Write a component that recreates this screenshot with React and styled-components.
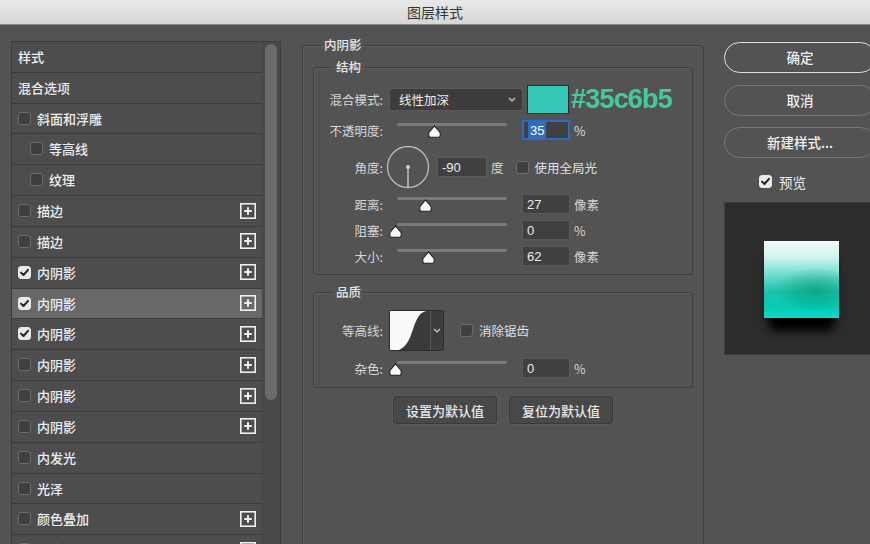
import React from 'react'
import styled, { createGlobalStyle } from 'styled-components'

const GlobalStyle = createGlobalStyle`
  html, body { margin: 0; padding: 0; background: #535353; }
  body { font-family: "Noto Sans CJK SC", "Noto Sans", sans-serif; }
  * { box-sizing: border-box; }
`

const Window = styled.div`
  width: 870px;
  height: 544px;
  overflow: hidden;
  background: #535353;
  display: flex;
  flex-direction: column;
`

const TitleBar = styled.div`
  height: 25px;
  flex: none;
  background: linear-gradient(#e9e9e9, #d6d6d6);
  border-bottom: 1px solid #8c8c8c;
  display: flex;
  align-items: center;
  justify-content: center;
  font-size: 14px;
  color: #353535;
  padding-bottom: 1px;
`

const Body = styled.div`
  display: flex;
  align-items: flex-start;
  flex: 1;
  min-height: 0;
`

/* ---------- left list ---------- */

const StyleList = styled.div`
  margin: 16px 0 0 11px;
  width: 270px;
  height: 520px;
  flex: none;
  display: flex;
  border: 1px solid #3b3b3b;
  border-bottom: none;
  background: #484848;
`

const Rows = styled.div`
  width: 250px;
  display: flex;
  flex-direction: column;
`

const Row = styled.div`
  height: 30.83px;
  flex: none;
  display: flex;
  align-items: center;
  gap: 6px;
  padding: 0 6px 1px ${p => (p.$indent ? 18 : 6)}px;
  background: ${p => (p.$selected ? '#686868' : '#4d4d4d')};
  border-bottom: 1px solid #3c3c3c;
  color: #ededed;
  font-size: 13px;
  font-weight: 500;
`

const RowText = styled.span`
  flex: 1;
`

const ScrollTrack = styled.div`
  width: 18px;
  padding: 2px 3px;
`

const ScrollThumb = styled.div`
  height: 356px;
  border-radius: 6px;
  background: #6c6c6c;
`

const Box = styled.span`
  width: 13px;
  height: 13px;
  flex: none;
  border-radius: 3px;
  background: ${p => (p.$on ? '#e9e9e9' : '#3f3f3f')};
  border: 1px solid ${p => (p.$on ? '#e9e9e9' : '#6c6c6c')};
  display: inline-flex;
  align-items: center;
  justify-content: center;
`

const Checkbox = ({ on }) => (
  <Box $on={on}>
    {on && (
      <svg width="11" height="11" viewBox="0 0 11 11">
        <path d="M2 5.6 L4.5 8 L9 2.8" fill="none" stroke="#262626" strokeWidth="2" strokeLinecap="round" strokeLinejoin="round" />
      </svg>
    )}
  </Box>
)

const PlusIcon = () => (
  <svg width="16" height="16" viewBox="0 0 16 16">
    <rect x="0.8" y="0.8" width="14.4" height="14.4" fill="none" stroke="#efefef" strokeWidth="1.6" />
    <path d="M8 4.2 V11.8 M4.2 8 H11.8" stroke="#efefef" strokeWidth="2" />
  </svg>
)

const listItems = [
  { label: '样式', box: false },
  { label: '混合选项', box: false },
  { label: '斜面和浮雕' },
  { label: '等高线', indent: true },
  { label: '纹理', indent: true },
  { label: '描边', plus: true },
  { label: '描边', plus: true },
  { label: '内阴影', plus: true, on: true },
  { label: '内阴影', plus: true, on: true, selected: true },
  { label: '内阴影', plus: true, on: true },
  { label: '内阴影', plus: true },
  { label: '内阴影', plus: true },
  { label: '内阴影', plus: true },
  { label: '内发光' },
  { label: '光泽' },
  { label: '颜色叠加', plus: true },
  { label: '渐变叠加', plus: true },
]

/* ---------- middle panel ---------- */

const Group = styled.fieldset`
  margin: ${p => p.$margin || '0'};
  padding: 0;
  min-width: 0;
  width: ${p => p.$width}px;
  height: ${p => (p.$height ? `${p.$height}px` : 'auto')};
  flex: none;
  border: 1px solid #3e3e3e;
  border-radius: 3px;
  box-shadow: inset 1px 1px 0 rgba(255, 255, 255, 0.06);
`

const Legend = styled.legend`
  margin-left: ${p => p.$indent}px;
  padding: 0 3px;
  font-size: 12.5px;
  line-height: 14px;
  color: #e4e4e4;
  font-weight: 500;
`

const GroupBody = styled.div`
  display: flex;
  flex-direction: column;
  gap: ${p => p.$gap || 6}px;
  padding: ${p => p.$pad};
`

const FieldRow = styled.div`
  display: flex;
  align-items: center;
  height: ${p => p.$h || 20}px;
`

const Label = styled.span`
  width: 69px;
  flex: none;
  text-align: right;
  font-size: 12.5px;
  color: #d6d6d6;
`

const Select = styled.div`
  margin-left: 6px;
  width: 134px;
  height: 23px;
  flex: none;
  display: flex;
  align-items: center;
  justify-content: space-between;
  padding: 0 6px 0 9px;
  background: #3d3d3d;
  border: 1px solid #5a5a5a;
  border-radius: 3px;
  font-size: 12.5px;
  color: #ececec;
`

const Swatch = styled.div`
  margin-left: 4px;
  width: 42px;
  height: 29px;
  flex: none;
  background: #35c6b5;
  border: 1px solid #2b2b2b;
`

const HexText = styled.span`
  margin-left: 2px;
  font-family: "Liberation Sans", Arial, sans-serif;
  font-size: 27px;
  font-weight: bold;
  letter-spacing: -0.8px;
  color: #45c89c;
  line-height: 1;
`

const SliderWrap = styled.div`
  position: relative;
  margin-left: 14px;
  width: 110px;
  height: 20px;
  flex: none;
`

const Track = styled.div`
  margin-top: 3px;
  height: 3px;
  border-radius: 2px;
  background: #7a7a7a;
`

const Thumb = styled.svg`
  position: absolute;
  top: 5px;
  width: 13px;
  height: 13px;
`

const Slider = ({ pos }) => (
  <SliderWrap>
    <Track />
    <Thumb viewBox="0 0 13 13" style={{ left: `${pos * 110 - 8}px` }}>
      <path
        d="M6.5 0.8 L11.6 7 Q12.2 7.7 12.2 8.6 L12.2 10.6 Q12.2 12.2 10.6 12.2 L2.4 12.2 Q0.8 12.2 0.8 10.6 L0.8 8.6 Q0.8 7.7 1.4 7 Z"
        fill="#f7f7f7"
        stroke="#222"
        strokeWidth="1.1"
      />
    </Thumb>
  </SliderWrap>
)

const Input = styled.div`
  margin-left: ${p => p.$ml || 15}px;
  width: ${p => p.$w || 48}px;
  height: 20px;
  flex: none;
  display: flex;
  align-items: center;
  padding-left: 4px;
  background: #404040;
  border: ${p => (p.$focus ? '2px solid #2c6bc4' : '1px solid #5a5a5a')};
  font-family: "Liberation Sans", Arial, sans-serif;
  font-size: 13px;
  color: #ececec;
`

const Selection = styled.span`
  background: #2f6dbd;
  color: #fff;
  padding: 1px 2px;
`

const Unit = styled.span`
  margin-left: ${p => p.$ml || 4}px;
  font-size: 12.5px;
  color: #d6d6d6;
`

const Inline = styled.span`
  display: inline-flex;
  align-items: center;
  gap: 6px;
  margin-left: ${p => p.$ml}px;
  font-size: 12.5px;
  color: #e0e0e0;
`

const Dial = styled.svg`
  margin-left: 3px;
  width: 44px;
  height: 44px;
  flex: none;
`

const ContourPick = styled.div`
  margin-left: 6px;
  height: 41px;
  display: flex;
  border: 1px solid #2e2e2e;
  border-radius: 2px;
  overflow: hidden;
`

const ContourDrop = styled.div`
  width: 13px;
  display: flex;
  align-items: center;
  justify-content: center;
  background: #3d3d3d;
  border-left: 1px solid #5a5a5a;
`

const Chevron = () => (
  <svg width="8" height="5" viewBox="0 0 8 5">
    <path d="M1 1 L4 4 L7 1" fill="none" stroke="#d0d0d0" strokeWidth="1.2" />
  </svg>
)

const ButtonRow = styled.div`
  display: flex;
  justify-content: center;
  gap: 12px;
  margin-top: 8px;
`

const FlatButton = styled.div`
  width: 104px;
  height: 28px;
  display: flex;
  align-items: center;
  justify-content: center;
  background: #484848;
  border: 1px solid #3a3a3a;
  border-radius: 3px;
  box-shadow: 0 0 0 1px rgba(255, 255, 255, 0.04);
  font-size: 13px;
  font-weight: 500;
  color: #e8e8e8;
`

/* ---------- right column ---------- */

const Side = styled.div`
  margin: 17px 0 0 20px;
  width: 152px;
  flex: none;
  display: flex;
  flex-direction: column;
  gap: 11.5px;
`

const PillButton = styled.div`
  height: 31px;
  display: flex;
  align-items: center;
  justify-content: center;
  padding-bottom: 1px;
  border-radius: 16px;
  border: 1.5px solid ${p => (p.$primary ? '#dedede' : '#777')};
  font-size: 13.5px;
  font-weight: 500;
  color: #f0f0f0;
`

const PreviewToggle = styled.div`
  display: flex;
  align-items: center;
  gap: 7px;
  margin: 5px 0 0 35px;
  height: 14px;
  font-size: 13.5px;
  color: #ededed;
`

const PreviewBox = styled.div`
  margin-top: 2px;
  height: 153px;
  padding: 38px 0 0 39px;
  background: #2d2d2d;
  border: 1px solid #3e3e3e;
`

const Tile = styled.div`
  width: 75px;
  height: 77px;
  background:
    radial-gradient(ellipse 55% 30% at 68% 64%, rgba(0, 150, 115, 0.6), rgba(0, 150, 115, 0) 100%),
    linear-gradient(#f0fcfa 0%, #d2f5ef 20%, #6cdccd 45%, #1cc3ad 65%, #05cbb7 88%, #0adccb 100%);
  box-shadow: 0 20px 9px -8px #000, 0 12px 10px -4px rgba(0, 0, 0, 0.9);
`

export default function App() {
  return (
    <Window>
      <GlobalStyle />
      <TitleBar>图层样式</TitleBar>
      <Body>
        <StyleList>
          <Rows>
            {listItems.map((it, i) => (
              <Row key={i} $indent={it.indent} $selected={it.selected}>
                {it.box !== false && <Checkbox on={it.on} />}
                <RowText>{it.label}</RowText>
                {it.plus && <PlusIcon />}
              </Row>
            ))}
          </Rows>
          <ScrollTrack>
            <ScrollThumb />
          </ScrollTrack>
        </StyleList>

        <Group $margin="13px 0 0 21px" $width={402} $height={540}>
          <Legend $indent={18}>内阴影</Legend>
          <Group $margin="8px 10px 0 10px" $width={380}>
            <Legend $indent={19}>结构</Legend>
            <GroupBody $pad="11px 0 8px 0" $gap={6}>
              <FieldRow $h={28} style={{ marginBottom: 1 }}>
                <Label>混合模式:</Label>
                <Select>
                  线性加深
                  <Chevron />
                </Select>
                <Swatch />
                <HexText>#35c6b5</HexText>
              </FieldRow>
              <FieldRow>
                <Label>不透明度:</Label>
                <Slider pos={0.35} />
                <Input $focus>
                  <Selection>35</Selection>
                </Input>
                <Unit>%</Unit>
              </FieldRow>
              <FieldRow $h={42}>
                <Label>角度:</Label>
                <Dial viewBox="0 0 44 44">
                  <circle cx="22" cy="22" r="20.5" fill="none" stroke="#bcbcbc" strokeWidth="1.3" />
                  <path d="M22 22 V42" stroke="#d0d0d0" strokeWidth="1.3" />
                  <circle cx="22" cy="22" r="2" fill="#d0d0d0" />
                </Dial>
                <Input $ml={7} $w={50}>-90</Input>
                <Unit>度</Unit>
                <Inline $ml={12}>
                  <Checkbox />
                  使用全局光
                </Inline>
              </FieldRow>
              <FieldRow>
                <Label>距离:</Label>
                <Slider pos={0.27} />
                <Input>27</Input>
                <Unit>像素</Unit>
              </FieldRow>
              <FieldRow>
                <Label>阻塞:</Label>
                <Slider pos={0} />
                <Input>0</Input>
                <Unit>%</Unit>
              </FieldRow>
              <FieldRow>
                <Label>大小:</Label>
                <Slider pos={0.3} />
                <Input>62</Input>
                <Unit>像素</Unit>
              </FieldRow>
            </GroupBody>
          </Group>

          <Group $margin="10px 10px 0 10px" $width={380}>
            <Legend $indent={19}>品质</Legend>
            <GroupBody $pad="11px 0 9px 0" $gap={7}>
              <FieldRow $h={41}>
                <Label>等高线:</Label>
                <ContourPick>
                  <svg width="40" height="41" viewBox="0 0 40 41">
                    <rect width="40" height="41" fill="#3a3a3a" />
                    <path d="M0 0 H37 C27 1 25 14 21 24 C17 35 11 40 1 41 H0 Z" fill="#fafafa" />
                  </svg>
                  <ContourDrop>
                    <Chevron />
                  </ContourDrop>
                </ContourPick>
                <Inline $ml={16}>
                  <Checkbox />
                  消除锯齿
                </Inline>
              </FieldRow>
              <FieldRow>
                <Label>杂色:</Label>
                <Slider pos={0} />
                <Input>0</Input>
                <Unit>%</Unit>
              </FieldRow>
            </GroupBody>
          </Group>

          <ButtonRow>
            <FlatButton>设置为默认值</FlatButton>
            <FlatButton>复位为默认值</FlatButton>
          </ButtonRow>
        </Group>

        <Side>
          <PillButton $primary>确定</PillButton>
          <PillButton>取消</PillButton>
          <PillButton>新建样式...</PillButton>
          <PreviewToggle>
            <Checkbox on />
            预览
          </PreviewToggle>
          <PreviewBox>
            <Tile />
          </PreviewBox>
        </Side>
      </Body>
    </Window>
  )
}
